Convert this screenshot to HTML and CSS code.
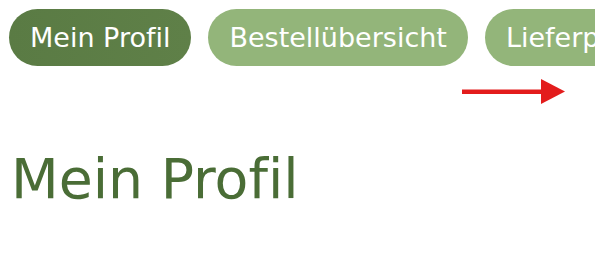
FILE: index.html
```html
<!DOCTYPE html>
<html lang="de">
<head>
<meta charset="utf-8">
<title>Mein Profil</title>
<link rel="stylesheet" href="styles.css">
</head>
<body>
<div class="page">
  <nav class="tabs">
    <a class="tab tab-active" href="#">Mein Profil</a>
    <a class="tab" href="#">Bestellübersicht</a>
    <a class="tab" href="#">Lieferprofile</a>
  </nav>
  <svg class="scroll-hint" width="103" height="25" viewBox="0 0 103 25" aria-hidden="true">
    <rect x="0" y="10.5" width="80" height="4.5" fill="#e31c1c"/>
    <polygon points="79,0 103,12.5 79,25" fill="#e31c1c"/>
  </svg>
  <h1 class="title">Mein Profil</h1>
</div>
</body>
</html>
```

FILE: styles.css
```css
html, body {
  margin: 0;
  padding: 0;
  background: #ffffff;
  overflow: hidden;
}

.page {
  position: relative;
  width: 595px;
  height: 257px;
  overflow: hidden;
  font-family: "DejaVu Sans", "Liberation Sans", sans-serif;
  font-variant-ligatures: none;
}

.tabs {
  display: flex;
  gap: 17px;
  padding: 9px 0 0 9px;
  white-space: nowrap;
}

.tab {
  flex: none;
  display: flex;
  align-items: center;
  height: 57px;
  padding: 0 21px;
  border-radius: 29px;
  background: #93b57a;
  color: #ffffff;
  font-size: 27px;
  font-weight: 400;
  text-decoration: none;
  box-sizing: border-box;
}

.tab-active {
  background: linear-gradient(90deg, #5a7b44 0%, #5f8048 100%);
}

.scroll-hint {
  position: absolute;
  left: 462px;
  top: 79px;
}

.title {
  margin: 86px 0 0 0;
  padding-left: 11px;
  font-size: 55.3px;
  line-height: 1;
  font-weight: 400;
  color: #4a6d36;
}
```
